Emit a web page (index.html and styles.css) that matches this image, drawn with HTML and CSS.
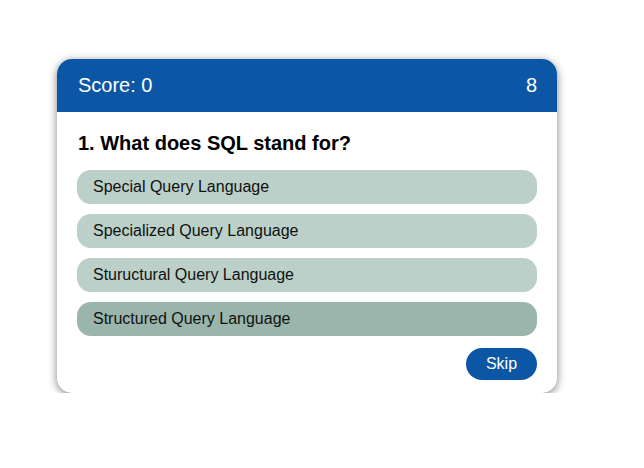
FILE: index.html
```html
<!DOCTYPE html>
<html>
<head>
<meta charset="utf-8">
<link rel="stylesheet" href="styles.css">
</head>
<body>
<div class="page">
  <div class="card">
    <div class="header">
      <span class="score">Score: 0</span>
      <span class="timer">8</span>
    </div>
    <div class="body">
      <h2 class="question">1. What does SQL stand for?</h2>
      <div class="options">
        <div class="option">Special Query Language</div>
        <div class="option">Specialized Query Language</div>
        <div class="option">Stuructural Query Language</div>
        <div class="option selected">Structured Query Language</div>
      </div>
      <div class="actions">
        <button class="skip">Skip</button>
      </div>
    </div>
  </div>
</div>
</body>
</html>
```
FILE: styles.css
```css
html, body {
  margin: 0;
  padding: 0;
  background: #ffffff;
  font-family: "Liberation Sans", Arial, sans-serif;
}
.page {
  padding: 59px 0 0 57px;
}
.card {
  width: 500px;
  border-radius: 15px;
  background: #ffffff;
  box-shadow: 0 2px 8px rgba(0, 0, 0, 0.5);
  overflow: hidden;
}
.header {
  height: 53px;
  background: #0b57a6;
  color: #ffffff;
  display: flex;
  align-items: center;
  justify-content: space-between;
  padding: 0 20px 0 21px;
  font-size: 20px;
}
.body {
  padding: 20px 20px 13px 20px;
}
.question {
  margin: 0 0 15px 1px;
  font-size: 20px;
  font-weight: bold;
  line-height: 23px;
  color: #000000;
}
.options {
  display: flex;
  flex-direction: column;
  gap: 10px;
}
.option {
  height: 34px;
  border-radius: 14px;
  background: #bbd0c8;
  color: #111111;
  font-size: 16px;
  display: flex;
  align-items: center;
  padding-left: 16px;
}
.option.selected {
  background: #9ab5ab;
}
.actions {
  display: flex;
  justify-content: flex-end;
  margin-top: 12px;
}
.skip {
  width: 71px;
  height: 32px;
  border: none;
  border-radius: 16px;
  background: #0b57a6;
  color: #ffffff;
  font-family: "Liberation Sans", Arial, sans-serif;
  font-size: 16px;
  padding: 0;
}
```
